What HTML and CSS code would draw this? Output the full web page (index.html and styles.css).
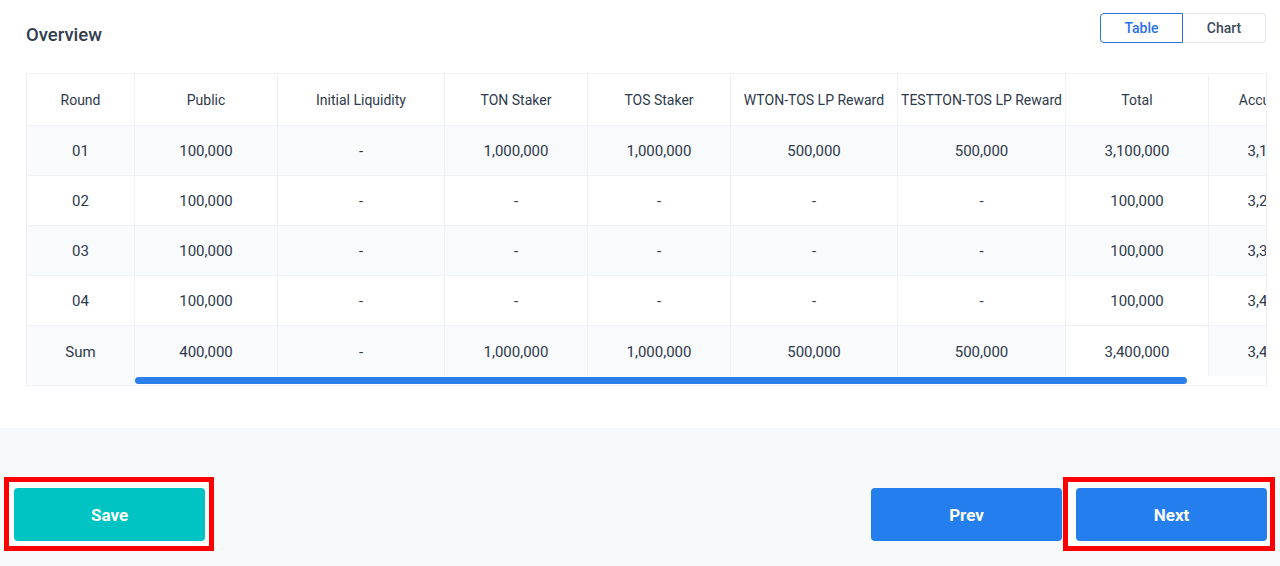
FILE: index.html
```html
<!DOCTYPE html>
<html>
<head>
<meta charset="utf-8">
<link rel="stylesheet" href="styles.css">
</head>
<body>
<section class="overview">
  <div class="head">
    <h2 class="title">Overview</h2>
    <div class="toggle">
      <button class="tg active">Table</button>
      <button class="tg">Chart</button>
    </div>
  </div>
  <div class="table-box">
    <div class="fixed-col">
      <div class="cell hd">Round</div>
      <div class="cell g">01</div>
      <div class="cell">02</div>
      <div class="cell g">03</div>
      <div class="cell">04</div>
      <div class="cell g sum">Sum</div>
    </div>
    <div class="scroll">
      <div class="grid">
        <div class="cell hd">Public</div>
        <div class="cell hd">Initial Liquidity</div>
        <div class="cell hd">TON Staker</div>
        <div class="cell hd">TOS Staker</div>
        <div class="cell hd">WTON-TOS LP Reward</div>
        <div class="cell hd">TESTTON-TOS LP Reward</div>
        <div class="cell hd">Total</div>
        <div class="cell hd">Accumulated</div>

        <div class="cell g">100,000</div>
        <div class="cell g">-</div>
        <div class="cell g">1,000,000</div>
        <div class="cell g">1,000,000</div>
        <div class="cell g">500,000</div>
        <div class="cell g">500,000</div>
        <div class="cell g">3,100,000</div>
        <div class="cell g">3,100,000</div>

        <div class="cell">100,000</div>
        <div class="cell">-</div>
        <div class="cell">-</div>
        <div class="cell">-</div>
        <div class="cell">-</div>
        <div class="cell">-</div>
        <div class="cell">100,000</div>
        <div class="cell">3,200,000</div>

        <div class="cell g">100,000</div>
        <div class="cell g">-</div>
        <div class="cell g">-</div>
        <div class="cell g">-</div>
        <div class="cell g">-</div>
        <div class="cell g">-</div>
        <div class="cell g">100,000</div>
        <div class="cell g">3,300,000</div>

        <div class="cell">100,000</div>
        <div class="cell">-</div>
        <div class="cell">-</div>
        <div class="cell">-</div>
        <div class="cell">-</div>
        <div class="cell">-</div>
        <div class="cell">100,000</div>
        <div class="cell">3,400,000</div>

        <div class="cell g">400,000</div>
        <div class="cell g">-</div>
        <div class="cell g">1,000,000</div>
        <div class="cell g">1,000,000</div>
        <div class="cell g">500,000</div>
        <div class="cell g">500,000</div>
        <div class="cell">3,400,000</div>
        <div class="cell g">3,400,000</div>
      </div>
      <div class="track"><div class="thumb"></div></div>
    </div>
  </div>
</section>
<footer class="footer">
  <div class="mark mark-save"><button class="btn save">Save</button></div>
  <div class="right">
    <button class="btn blue">Prev</button>
    <div class="mark mark-next"><button class="btn blue">Next</button></div>
  </div>
</footer>
</body>
</html>
```
FILE: styles.css
```css
* { box-sizing: border-box; }
html, body { margin: 0; padding: 0; }
body {
  width: 1280px;
  height: 566px;
  overflow: hidden;
  background: #ffffff;
  font-family: Roboto, "Liberation Sans", sans-serif;
  color: #3d495d;
}
.overview {
  padding: 13px 13px 0 26px;
  height: 428px;
}
.head {
  display: flex;
  justify-content: space-between;
  align-items: flex-start;
  height: 60px;
}
.title {
  margin: 11px 0 0 0;
  font-size: 18.5px;
  font-weight: 500;
  line-height: 22px;
  color: #323d50;
}
.toggle {
  display: flex;
  margin-right: 1px;
}
.tg {
  width: 83px;
  height: 30px;
  border: 1px solid #dfe4ee;
  background: #fff;
  font-family: Roboto, "Liberation Sans", sans-serif;
  font-size: 14px;
  font-weight: 500;
  color: #3d495d;
  padding: 0;
  cursor: pointer;
}
.tg:first-child { border-radius: 4px 0 0 4px; }
.tg:last-child { border-radius: 0 4px 4px 0; border-left: none; }
.tg.active { border-color: #2a72e5; color: #2a72e5; }

.table-box {
  display: flex;
  width: 1241px;
  height: 313px;
  border: 1px solid #eff1f6;
}
.fixed-col {
  width: 108px;
  flex: none;
  display: flex;
  flex-direction: column;
  border-right: 1px solid #eff1f6;
}
.cell {
  height: 50px;
  display: flex;
  align-items: center;
  justify-content: center;
  font-size: 15px;
  font-weight: 400;
  color: #2e394b;
  border-bottom: 1px solid #eff1f6;
  white-space: nowrap;
  background: #fff;
  padding-top: 1px;
}
.cell.hd {
  height: 52px;
  font-size: 14px;
  color: #2e394b;
  padding-top: 0;
}
.cell.g { background: #f9fafc; }
.fixed-col .sum {
  flex: 1;
  border-bottom: none;
  padding-bottom: 9px;
}
.scroll {
  flex: 1;
  overflow: hidden;
  min-width: 0;
}
.grid {
  display: grid;
  grid-template-columns: 143px 167px 143px 143px 167px 168px 143px 143px;
  width: 1217px;
}
.grid .cell { border-right: 1px solid #eff1f6; }
.grid .cell:nth-last-child(-n+8) { border-bottom: none; }
.track {
  height: 8px;
  padding-top: 1px;
}
.thumb {
  width: 1052px;
  height: 7px;
  background: #2a7fea;
  border-radius: 4px;
}

.footer {
  height: 138px;
  background: #f8f9fb;
  display: flex;
  justify-content: space-between;
  align-items: flex-start;
  padding: 49px 5px 0 4px;
}
.right {
  display: flex;
  align-items: flex-start;
}
.mark {
  border: 5px solid #ff0000;
  background: #fff;
  padding: 6px 4px 5px 5px;
}
.btn {
  display: block;
  width: 191px;
  height: 53px;
  border: none;
  border-radius: 4px;
  font-family: Roboto, "Liberation Sans", sans-serif;
  font-size: 17px;
  font-weight: 700;
  color: #fff;
  padding: 0;
  cursor: pointer;
}
.save { background: #00c3c4; }
.blue { background: #257eee; }
.right > .blue { margin-top: 11px; margin-right: 1px; }
.mark-next { padding: 6px 3px 5px 8px; }
```
